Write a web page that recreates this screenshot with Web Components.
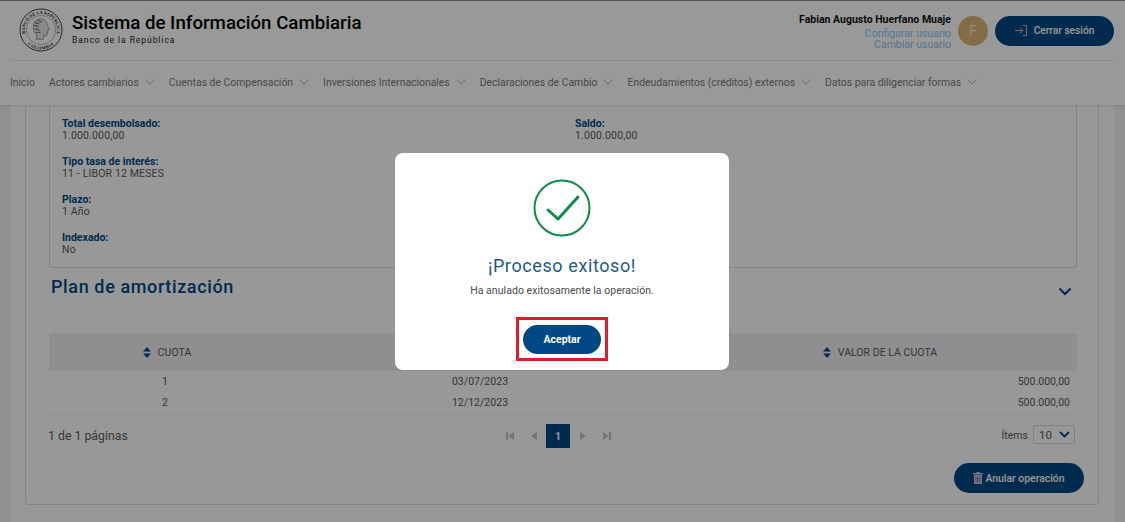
<!DOCTYPE html>
<html lang="es">
<head>
<meta charset="utf-8">
<title>Sistema de Información Cambiaria</title>
<style>
  html, body { margin: 0; padding: 0; height: 522px; overflow: hidden; background: #f1f1f1; }
  body { font-family: Roboto, "Liberation Sans", sans-serif; }
</style>
</head>
<body>
<app-page>
  <app-header slot="header"></app-header>
  <content-panel>
    <details-card>
      <info-field label="Total desembolsado:" value="1.000.000,00"></info-field>
      <info-field label="Saldo:" value="1.000.000,00"></info-field>
      <info-field label="Tipo tasa de interés:" value="11 - LIBOR 12 MESES"></info-field>
      <span></span>
      <info-field label="Plazo:" value="1 Año"></info-field>
      <span></span>
      <info-field label="Indexado:" value="No"></info-field>
    </details-card>
    <section-title>Plan de amortización</section-title>
    <amort-table></amort-table>
    <table-footer></table-footer>
    <action-row>Anular operación</action-row>
  </content-panel>
</app-page>
<success-modal title-text="¡Proceso exitoso!" message="Ha anulado exitosamente la operación." action="Aceptar"></success-modal>

<script>
class AppPage extends HTMLElement {
  constructor() {
    super();
    this.attachShadow({ mode: 'open' });
    this.shadowRoot.innerHTML = `
      <style>
        :host { display: block; height: 522px; overflow: hidden; }
        .body { margin: 0 11px 0 11px; background: #fdfdfd; padding: 0 15px 0 14px; height: 417px; box-sizing: border-box; }
      </style>
      <slot name="header"></slot>
      <div class="body"><slot></slot></div>
    `;
  }
}

class AppHeader extends HTMLElement {
  constructor() {
    super();
    this.attachShadow({ mode: 'open' });
    const items = [
      'Actores cambiarios', 'Cuentas de Compensación', 'Inversiones Internacionales',
      'Declaraciones de Cambio', 'Endeudamientos (créditos) externos', 'Datos para diligenciar formas',
    ];
    const chevron = `<svg width="10" height="6" viewBox="0 0 10 6"><path d="M.5.5 5 5 9.5.5" fill="none" stroke="#b9b39f" stroke-width="1"/></svg>`;
    this.shadowRoot.innerHTML = `
      <style>
        :host { display: block; height: 105px; box-sizing: border-box; background: #ffffff; border-top: 1px solid #888; box-shadow: 0 1px 3px rgba(0,0,0,.12); color: #000; position: relative; }
        .top { height: 59px; margin: 0 11px 0 10px; display: flex; align-items: center; border-bottom: 1px solid #ececec; }
        .brand { display: flex; align-items: center; gap: 9px; margin-left: 9px; margin-top: -1px; }
        .brand svg { display: block; }
        .text { margin-top: -3px; }
        .title { font-size: 18.7px; font-weight: 500; line-height: 23px; color: #000; }
        .sub { font-size: 8.5px; line-height: 11px; letter-spacing: .95px; color: #222; }
        .user { margin-left: auto; text-align: right; font-size: 10.5px; margin-right: 7px; margin-top: 1px; }
        .name { font-weight: 700; font-size: 10.5px; line-height: 13px; color: #111; margin-bottom: 2px; }
        .link { color: #8cc4ef; line-height: 11px; }
        .avatar { width: 30px; height: 30px; border-radius: 50%; background: #dcb676; color: #f3e3c6; font-size: 14px; display: flex; align-items: center; justify-content: center; margin-right: 7px; }
        .logout { width: 119px; height: 30px; border-radius: 15px; background: #004884; color: #fff; font-size: 10.2px; font-weight: 500; display: flex; align-items: center; justify-content: center; gap: 7px; }
        nav { display: flex; align-items: center; height: 42px; padding-left: 10px; font-size: 10.4px; color: #7a7a7a; white-space: nowrap; }
        .home { margin-right: 14px; }
        .item { display: flex; align-items: center; gap: 6px; margin-right: 14px; }
      </style>
      <div class="top">
        <div class="brand">
          <svg width="44" height="44" viewBox="0 0 44 44">
            <defs>
              <path id="arcTop" d="M8.100 30a16 16 0 1 1 27.800 0"/>
              <path id="arcBottom" d="M7.100 34.500a19.500 19.500 0 0 0 29.800 0"/>
            </defs>
            <circle cx="22" cy="22" r="21" fill="#fff" stroke="#444" stroke-width="1"/>
            <circle cx="22" cy="22" r="14.600" fill="#fff" stroke="#777" stroke-width=".5"/>
            <text font-family="Liberation Serif, serif" font-size="4.400" font-weight="700" fill="#222" text-anchor="middle"><textPath href="#arcTop" startOffset="50%">BANCO DE LA REPÚBLICA</textPath></text>
            <text font-family="Liberation Serif, serif" font-size="4.400" font-weight="700" fill="#222" text-anchor="middle" letter-spacing=".5"><textPath href="#arcBottom" startOffset="50%">COLOMBIA</textPath></text>
            <path d="M17 12.500c3.500-2.600 8-2 10.200 1.200.9 1.400 1 3 1.300 4.200l2 3.400-1.800.8.3 2.200-1.100.7.2 1.600c-.2 1.200-1.600 1.400-3.400 1.200l-.3 3.400h-7l.7-4.200c-2.700-2.200-4-5-3.800-8 .1-2.600 1-5 2.700-6.500z" fill="#e4e4e4" stroke="#444" stroke-width=".5"/>
            <path d="M15.800 14.500c1.500 1 3 .5 4.500 1.500M15 17.500c2 .5 3 0 5 1.500M15.500 21c2 .2 3.500-.2 5 1.500M17 24.500c1.500-.5 3-.5 4.500.5M18.500 12.500c1.500.8 3 .4 4.500 1.800" fill="none" stroke="#333" stroke-width=".8"/>
          </svg>
          <div class="text">
            <div class="title">Sistema de Información Cambiaria</div>
            <div class="sub">Banco de la República</div>
          </div>
        </div>
        <div class="user">
          <div class="name">Fabian Augusto Huerfano Muaje</div>
          <div class="link">Configurar usuario</div>
          <div class="link">Cambiar usuario</div>
        </div>
        <div class="avatar">F</div>
        <div class="logout">
          <svg width="12" height="11" viewBox="0 0 12 11" fill="none" stroke="#c9b98f" stroke-width="1"><path d="M0 5.500h7.500M5 2.500l3 3-3 3M8 .5h3.500v10H8"/></svg>
          <span>Cerrar sesión</span>
        </div>
      </div>
      <nav>
        <span class="home">Inicio</span>
        ${items.map((t) => `<span class="item">${t}${chevron}</span>`).join('')}
      </nav>
    `;
  }
}

class ContentPanel extends HTMLElement {
  constructor() {
    super();
    this.attachShadow({ mode: 'open' });
    this.shadowRoot.innerHTML = `
      <style>
        :host { display: block; box-sizing: border-box; height: 400px; border: 1px solid #dcdcdc; border-top: 0; border-radius: 0 0 4px 4px; padding: 0 21px 0 23px; position: relative; }
      </style>
      <slot></slot>
    `;
  }
}

class DetailsCard extends HTMLElement {
  constructor() {
    super();
    this.attachShadow({ mode: 'open' });
    this.shadowRoot.innerHTML = `
      <style>
        :host { display: grid; grid-template-columns: 513px 1fr; row-gap: 14px; align-content: start; box-sizing: border-box; height: 163px; border: 1px solid #dcdcdc; border-top: 0; border-radius: 0 0 4px 4px; padding: 13px 12px 0; }
      </style>
      <slot></slot>
    `;
  }
}

class InfoField extends HTMLElement {
  constructor() {
    super();
    this.attachShadow({ mode: 'open' });
    this.shadowRoot.innerHTML = `
      <style>
        :host { display: block; font-size: 10.500px; line-height: 12px; color: #5a5a5a; letter-spacing: .15px; }
        b { display: block; color: #004884; font-weight: 700; letter-spacing: 0; }
      </style>
      <b>${this.getAttribute('label')}</b><span>${this.getAttribute('value')}</span>
    `;
  }
}

class SectionTitle extends HTMLElement {
  constructor() {
    super();
    this.attachShadow({ mode: 'open' });
    this.shadowRoot.innerHTML = `
      <style>
        :host { display: flex; align-items: flex-start; justify-content: space-between; height: 65px; padding: 8px 5px 0 2px; box-sizing: border-box; color: #004884; font-size: 18px; font-weight: 500; line-height: 22px; letter-spacing: .62px; }
        svg { margin-top: 11px; }
      </style>
      <span><slot></slot></span>
      <svg width="14" height="9" viewBox="0 0 14 9"><path d="M1.500 1.500 7 7l5.500-5.500" fill="none" stroke="#004884" stroke-width="2"/></svg>
    `;
  }
}

class AmortTable extends HTMLElement {
  constructor() {
    super();
    this.attachShadow({ mode: 'open' });
    const sort = `<svg width="8" height="11" viewBox="0 0 8 11" fill="#004884"><path d="M4 0l4 4.500H0zM4 11 0 6.500h8z"/></svg>`;
    this.shadowRoot.innerHTML = `
      <style>
        :host { display: block; font-size: 10.500px; color: #5a5a5a; letter-spacing: .03px; }
        .row { display: grid; grid-template-columns: 236px 398px 1fr; }
        .head { height: 38px; background: #efeff2; align-items: center; border-radius: 3px 3px 0 0; }
        .head span { display: flex; align-items: center; justify-content: center; gap: 7px; }
        .body { border-bottom: 1px solid #f0f0f0; border-radius: 0 0 4px 4px; padding: 0 0 1px; }
        .body .row { height: 21px; align-items: center; }
        .c { text-align: center; padding-right: 4px; }
        .d { text-align: center; padding-right: 8px; }
        .v { text-align: right; padding-right: 7px; }
      </style>
      <div class="row head">
        <span>${sort}CUOTA</span><span>&nbsp;</span><span>${sort}VALOR DE LA CUOTA</span>
      </div>
      <div class="body">
        <div class="row"><div class="c">1</div><div class="d">03/07/2023</div><div class="v">500.000,00</div></div>
        <div class="row"><div class="c">2</div><div class="d">12/12/2023</div><div class="v">500.000,00</div></div>
      </div>
    `;
  }
}

class TableFooter extends HTMLElement {
  constructor() {
    super();
    this.attachShadow({ mode: 'open' });
    const first = `<svg width="8" height="8" viewBox="0 0 8 8" fill="#c4c4c4"><path d="M0 0h2v8H0zM8 0v8L2 4z"/></svg>`;
    const prev = `<svg width="6" height="8" viewBox="0 0 6 8" fill="#c4c4c4"><path d="M6 0v8L0 4z"/></svg>`;
    const next = `<svg width="6" height="8" viewBox="0 0 6 8" fill="#c4c4c4"><path d="M0 0v8l6-4z"/></svg>`;
    const last = `<svg width="8" height="8" viewBox="0 0 8 8" fill="#c4c4c4"><path d="M0 0v8l6-4zM6 0h2v8H6z"/></svg>`;
    this.shadowRoot.innerHTML = `
      <style>
        :host { display: grid; grid-template-columns: 450px auto 1fr; align-items: center; height: 34px; margin-top: 4px; margin-left: -1px; font-size: 10.500px; color: #5a5a5a; }
        .pages { font-size: 12.300px; }
        .pager { display: flex; align-items: center; gap: 0; }
        .pager svg { display: block; }
        .g { width: 24px; display: flex; justify-content: center; }
        .cur { width: 24px; height: 24px; background: #004884; color: #fff; font-weight: 700; display: flex; align-items: center; justify-content: center; }
        .cur + .g { margin-left: 1px; }
        .items { display: flex; align-items: center; justify-content: flex-end; gap: 5px; padding-right: 2px; margin-top: -3px; }
        .items span { margin-top: 2px; }
        .select { width: 42px; height: 19px; box-sizing: border-box; border: 1px solid #d8d8d8; border-radius: 2px; display: flex; align-items: center; gap: 7px; padding-left: 5px; font-size: 11.500px; }
      </style>
      <div class="pages">1 de 1 páginas</div>
      <div class="pager">
        <div class="g">${first}</div><div class="g">${prev}</div>
        <div class="cur">1</div>
        <div class="g">${next}</div><div class="g">${last}</div>
      </div>
      <div class="items">
        <span>Ítems</span>
        <div class="select">10
          <svg width="11" height="7" viewBox="0 0 11 7"><path d="M1 1l4.500 4.500L10 1" fill="none" stroke="#004884" stroke-width="1.800"/></svg>
        </div>
      </div>
    `;
  }
}

class ActionRow extends HTMLElement {
  constructor() {
    super();
    this.attachShadow({ mode: 'open' });
    this.shadowRoot.innerHTML = `
      <style>
        :host { display: flex; justify-content: flex-end; margin-top: 10px; margin-right: -7px; }
        .btn { width: 130px; height: 30px; border-radius: 15px; background: #004884; color: #fff; font-size: 10.400px; font-weight: 500; display: flex; align-items: center; justify-content: center; gap: 2px; }
        svg { display: block; }
      </style>
      <div class="btn">
        <svg width="10" height="12" viewBox="0 0 10 12"><path d="M3.500 0h3v1H10v1.500H0V1h3.500z" fill="#c9c3dd"/><path d="M1 3h8v9H1z" fill="#c9c3dd"/><path d="M3 4.500v6M5 4.500v6M7 4.500v6" stroke="#5a6f9f" stroke-width="1"/></svg>
        <span><slot></slot></span>
      </div>
    `;
  }
}

class SuccessModal extends HTMLElement {
  constructor() {
    super();
    this.attachShadow({ mode: 'open' });
    this.shadowRoot.innerHTML = `
      <style>
        :host { position: fixed; inset: 0; display: flex; align-items: center; justify-content: center; background: rgba(0,0,0,.4); z-index: 10; }
        .dialog { width: 334px; height: 217px; box-sizing: border-box; background: #fff; border-radius: 8px; display: flex; flex-direction: column; align-items: center; padding-top: 26px; margin-left: -1px; }
        svg { display: block; }
        h2 { margin: 16px 0 0; font-size: 18px; font-weight: 400; line-height: 26px; letter-spacing: .6px; color: #1d5a8c; }
        p { margin: 4px 0 0; font-size: 10.500px; line-height: 16px; letter-spacing: .05px; color: #4a4a4a; }
        .mark { margin-top: 18px; border: 3px solid #e31b2e; padding: 5px 4px 4px 4px; background: #fff; }
        .ok { width: 78px; height: 29px; border-radius: 15px; background: #004884; color: #fff; font-size: 10.500px; font-weight: 700; display: flex; align-items: center; justify-content: center; }
      </style>
      <div class="dialog">
        <svg width="58" height="58" viewBox="0 0 58 58" fill="none" stroke="#0e8a4b">
          <circle cx="29" cy="29" r="27.500" stroke-width="2"/>
          <path d="M15 31 25 40 45 18" stroke-width="3" stroke-linecap="round" stroke-linejoin="round"/>
        </svg>
        <h2>${this.getAttribute('title-text')}</h2>
        <p>${this.getAttribute('message')}</p>
        <div class="mark"><div class="ok">${this.getAttribute('action')}</div></div>
      </div>
    `;
  }
}

customElements.define('app-page', AppPage);
customElements.define('app-header', AppHeader);
customElements.define('content-panel', ContentPanel);
customElements.define('details-card', DetailsCard);
customElements.define('info-field', InfoField);
customElements.define('section-title', SectionTitle);
customElements.define('amort-table', AmortTable);
customElements.define('table-footer', TableFooter);
customElements.define('action-row', ActionRow);
customElements.define('success-modal', SuccessModal);
</script>
</body>
</html>
